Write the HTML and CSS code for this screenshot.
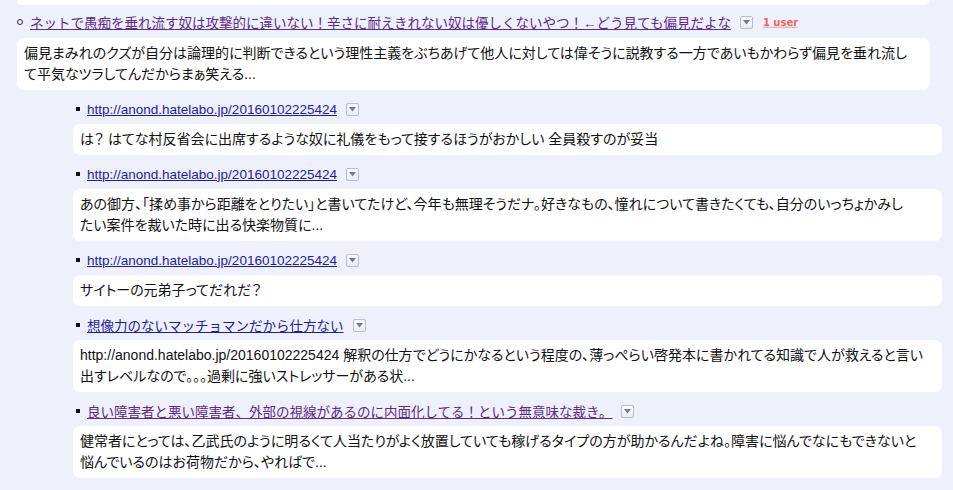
FILE: index.html
```html
<!DOCTYPE html>
<html lang="ja">

<head>
    <meta charset="UTF-8" />
    <meta name="viewport" content="width=device-width, initial-scale=1.0" />
    <title>言及 - はてな匿名ダイアリー</title>
    <link rel="stylesheet" href="styles.css">
</head>

<body>
    <div class="thread">
        <div class="bubble bubble-cut"></div>

        <ul class="entries">
            <li class="entry">
                <div class="head">
                    <span class="dot"></span>
                    <a class="title visited" href="#">ネットで愚痴を垂れ流す奴は攻撃的に違いない！辛さに耐えきれない奴は優しくないやつ！←どう見ても偏見だよな</a>
                    <span class="menu-btn"><svg width="7" height="5" viewBox="0 0 7 5"><path d="M0 0h7L3.5 4.5z" fill="#6c7aa8"/></svg></span>
                    <a class="users" href="#">1 user</a>
                </div>
                <div class="bubble">偏見まみれのクズが自分は論理的に判断できるという理性主義をぶちあげて他人に対しては偉そうに説教する一方であいもかわらず偏見を垂れ流し<br>て平気なツラしてんだからまぁ笑える...</div>

                <ul class="replies">
                    <li class="reply">
                        <div class="head">
                            <span class="square"></span>
                            <a class="title" href="#">http://anond.hatelabo.jp/20160102225424</a>
                            <span class="menu-btn"><svg width="7" height="5" viewBox="0 0 7 5"><path d="M0 0h7L3.5 4.5z" fill="#6c7aa8"/></svg></span>
                        </div>
                        <div class="bubble">は？ はてな村反省会に出席するような奴に礼儀をもって接するほうがおかしい 全員殺すのが妥当</div>
                    </li>
                    <li class="reply">
                        <div class="head">
                            <span class="square"></span>
                            <a class="title" href="#">http://anond.hatelabo.jp/20160102225424</a>
                            <span class="menu-btn"><svg width="7" height="5" viewBox="0 0 7 5"><path d="M0 0h7L3.5 4.5z" fill="#6c7aa8"/></svg></span>
                        </div>
                        <div class="bubble">あの御方、「揉め事から距離をとりたい」と書いてたけど、今年も無理そうだナ。好きなもの、憧れについて書きたくても、自分のいっちょかみし<br>たい案件を裁いた時に出る快楽物質に...</div>
                    </li>
                    <li class="reply">
                        <div class="head">
                            <span class="square"></span>
                            <a class="title" href="#">http://anond.hatelabo.jp/20160102225424</a>
                            <span class="menu-btn"><svg width="7" height="5" viewBox="0 0 7 5"><path d="M0 0h7L3.5 4.5z" fill="#6c7aa8"/></svg></span>
                        </div>
                        <div class="bubble">サイトーの元弟子ってだれだ？</div>
                    </li>
                    <li class="reply">
                        <div class="head">
                            <span class="square"></span>
                            <a class="title" href="#">想像力のないマッチョマンだから仕方ない</a>
                            <span class="menu-btn"><svg width="7" height="5" viewBox="0 0 7 5"><path d="M0 0h7L3.5 4.5z" fill="#6c7aa8"/></svg></span>
                        </div>
                        <div class="bubble">http://anond.hatelabo.jp/20160102225424 解釈の仕方でどうにかなるという程度の、薄っぺらい啓発本に書かれてる知識で人が救えると言い<br>出すレベルなので。。。過剰に強いストレッサーがある状...</div>
                    </li>
                    <li class="reply">
                        <div class="head">
                            <span class="square"></span>
                            <a class="title visited" href="#">良い障害者と悪い障害者、外部の視線があるのに内面化してる！という無意味な裁き。</a>
                            <span class="menu-btn"><svg width="7" height="5" viewBox="0 0 7 5"><path d="M0 0h7L3.5 4.5z" fill="#6c7aa8"/></svg></span>
                        </div>
                        <div class="bubble">健常者にとっては、乙武氏のように明るくて人当たりがよく放置していても稼げるタイプの方が助かるんだよね。障害に悩んでなにもできないと<br>悩んでいるのはお荷物だから、やればで...</div>
                    </li>
                </ul>
            </li>
        </ul>
    </div>
</body>

</html>
```

FILE: styles.css
```css
body {
    margin: 0;
    background: #eef0fb;
    color: #111;
    font-family: "Liberation Sans", "Noto Sans CJK JP", sans-serif;
    font-size: 13px;
}

.thread {
    width: 913px;
    padding-left: 17px;
}

ul {
    list-style: none;
    margin: 0;
    padding: 0;
}

.bubble {
    background: #fff;
    border-radius: 7px;
    padding: 5px 7px;
    font-size: 14px;
    line-height: 21px;
    font-feature-settings: "palt";
}

.bubble-cut {
    height: 5px;
    padding: 0;
    border-radius: 0 0 7px 7px;
}

.entry {
    margin-top: 7px;
}

.head {
    display: flex;
    align-items: center;
    height: 20px;
    margin-bottom: 6px;
    white-space: nowrap;
}

.dot {
    width: 4px;
    height: 4px;
    border: 1px solid #333;
    border-radius: 50%;
    margin-right: 7px;
}

.square {
    width: 4px;
    height: 4px;
    background: #111;
    margin: 0 7px 0 3px;
}

.title {
    color: #1c1ca8;
    font-size: 13.5px;
    text-decoration: underline;
}

.title.visited {
    color: #5b2a8a;
}

.menu-btn {
    display: flex;
    align-items: center;
    justify-content: center;
    width: 11px;
    height: 11px;
    margin-left: 9px;
    border: 1px solid #b9bdd2;
    border-radius: 2px;
    background: linear-gradient(#ffffff, #e9ebf4);
}

.users {
    margin-left: 10px;
    color: #f06464;
    font-family: "DejaVu Sans", sans-serif;
    font-size: 10px;
    font-weight: bold;
    text-decoration: underline;
    text-decoration-color: #f7a9a9;
}

.replies {
    margin: 9px -12px 0 56px;
}

.reply {
    margin-bottom: 9px;
}

.reply .head {
    margin-bottom: 5px;
}
```
